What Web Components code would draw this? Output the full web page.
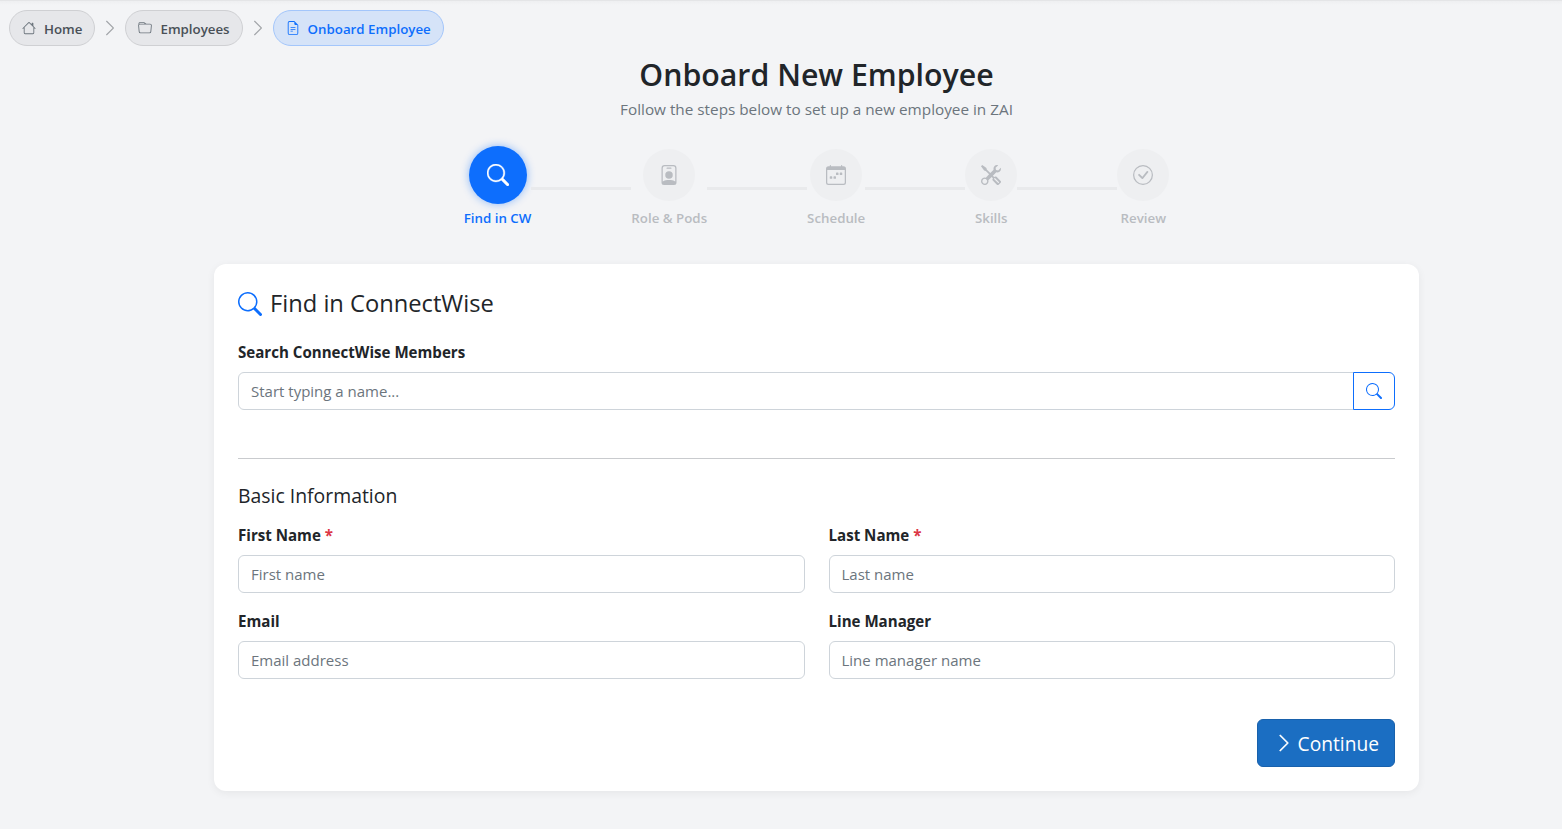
<!DOCTYPE html>
<html lang="en">
<head>
<meta charset="utf-8">
<title>Onboard New Employee</title>
<style>
	html, body { margin: 0; height: 100%; }
	body {
		background: #f3f4f6;
		color: #212529;
		font-family: "Open Sans", "Noto Sans", sans-serif;
		font-size: 16px;
		overflow: hidden;
	}
</style>
</head>
<body>
<onboard-page>
	<crumb-bar slot="crumbs">
		<crumb-pill icon="house">Home</crumb-pill>
		<crumb-pill icon="folder">Employees</crumb-pill>
		<crumb-pill icon="file" active>Onboard Employee</crumb-pill>
	</crumb-bar>
	<step-bar slot="steps">
		<step-item icon="search" active>Find in CW</step-item>
		<step-item icon="badge">Role &amp; Pods</step-item>
		<step-item icon="calendar">Schedule</step-item>
		<step-item icon="tools">Skills</step-item>
		<step-item icon="check">Review</step-item>
	</step-bar>
	<find-card slot="card"></find-card>
</onboard-page>

<script>
const ICONS = {
	search: 'M11.742 10.344a6.5 6.5 0 1 0-1.397 1.398h-.001c.03.04.062.078.098.115l3.85 3.85a1 1 0 0 0 1.415-1.414l-3.85-3.85a1.007 1.007 0 0 0-.115-.1zM12 6.5a5.5 5.5 0 1 1-11 0 5.5 5.5 0 0 1 11 0z',
	house: 'M8.707 1.5a1 1 0 0 0-1.414 0L.646 8.146a.5.5 0 0 0 .708.708L2 8.207V13.5A1.5 1.5 0 0 0 3.5 15h9a1.5 1.5 0 0 0 1.5-1.5V8.207l.646.647a.5.5 0 0 0 .708-.708L13 5.793V2.5a.5.5 0 0 0-.5-.5h-1a.5.5 0 0 0-.5.5v1.293L8.707 1.5ZM13 7.207V13.5a.5.5 0 0 1-.5.5h-9a.5.5 0 0 1-.5-.5V7.207l5-5 5 5Z',
	folder: 'M.54 3.87.5 3a2 2 0 0 1 2-2h3.672a2 2 0 0 1 1.414.586l.828.828A2 2 0 0 0 9.828 3h3.982a2 2 0 0 1 1.992 2.181l-.637 7A2 2 0 0 1 13.174 14H2.826a2 2 0 0 1-1.991-1.819l-.637-7a1.99 1.99 0 0 1 .342-1.31zM2.19 4a1 1 0 0 0-.996 1.09l.637 7a1 1 0 0 0 .995.91h10.348a1 1 0 0 0 .995-.91l.637-7A1 1 0 0 0 13.81 4H2.19zm4.69-1.707A1 1 0 0 0 6.172 2H2.5a1 1 0 0 0-1 .981l.006.139C1.72 3.042 1.95 3 2.19 3h5.396l-.707-.707z',
	file: 'M5.5 7a.5.5 0 0 0 0 1h5a.5.5 0 0 0 0-1h-5zM5 9.5a.5.5 0 0 1 .5-.5h5a.5.5 0 0 1 0 1h-5a.5.5 0 0 1-.5-.5zm0 2a.5.5 0 0 1 .5-.5h2a.5.5 0 0 1 0 1h-2a.5.5 0 0 1-.5-.5zM9.5 0H4a2 2 0 0 0-2 2v12a2 2 0 0 0 2 2h8a2 2 0 0 0 2-2V4.5L9.5 0zm0 1v2A1.5 1.5 0 0 0 11 4.5h2V14a1 1 0 0 1-1 1H4a1 1 0 0 1-1-1V2a1 1 0 0 1 1-1h5.5z',
	chevron: 'M4.646 1.646a.5.5 0 0 1 .708 0l6 6a.5.5 0 0 1 0 .708l-6 6a.5.5 0 0 1-.708-.708L10.293 8 4.646 2.354a.5.5 0 0 1 0-.708z',
	badge: 'M6.5 2a.5.5 0 0 0 0 1h3a.5.5 0 0 0 0-1h-3zM11 8a3 3 0 1 1-6 0 3 3 0 0 1 6 0zM4.5 0A2.5 2.5 0 0 0 2 2.5V14a2 2 0 0 0 2 2h8a2 2 0 0 0 2-2V2.5A2.5 2.5 0 0 0 11.5 0h-7zM3 2.5A1.5 1.5 0 0 1 4.5 1h7A1.5 1.5 0 0 1 13 2.5v10.795a4.2 4.2 0 0 0-.776-.492C11.392 12.387 10.063 12 8 12s-3.392.387-4.224.803a4.2 4.2 0 0 0-.776.492V2.5z',
	calendar: 'M11 6.5a.5.5 0 0 1 .5-.5h1a.5.5 0 0 1 .5.5v1a.5.5 0 0 1-.5.5h-1a.5.5 0 0 1-.5-.5v-1zm-3 0a.5.5 0 0 1 .5-.5h1a.5.5 0 0 1 .5.5v1a.5.5 0 0 1-.5.5h-1a.5.5 0 0 1-.5-.5v-1zm-5 3a.5.5 0 0 1 .5-.5h1a.5.5 0 0 1 .5.5v1a.5.5 0 0 1-.5.5h-1a.5.5 0 0 1-.5-.5v-1zm3 0a.5.5 0 0 1 .5-.5h1a.5.5 0 0 1 .5.5v1a.5.5 0 0 1-.5.5h-1a.5.5 0 0 1-.5-.5v-1zM3.5 0a.5.5 0 0 1 .5.5V1h8V.5a.5.5 0 0 1 1 0V1h1a2 2 0 0 1 2 2v11a2 2 0 0 1-2 2H2a2 2 0 0 1-2-2V3a2 2 0 0 1 2-2h1V.5a.5.5 0 0 1 .5-.5zM1 4v10a1 1 0 0 0 1 1h12a1 1 0 0 0 1-1V4H1z',
	tools: 'M1 0 0 1l2.2 3.081a1 1 0 0 0 .815.419h.07a1 1 0 0 1 .708.293l2.675 2.675-2.617 2.654A3.003 3.003 0 0 0 0 13a3 3 0 1 0 5.878-.851l2.654-2.617.968.968-.305.914a1 1 0 0 0 .242 1.023l3.27 3.27a.997.997 0 0 0 1.414 0l1.586-1.586a.997.997 0 0 0 0-1.414l-3.27-3.27a1 1 0 0 0-1.023-.242L10.5 9.5l-.96-.96 2.68-2.643A3.005 3.005 0 0 0 16 3c0-.269-.035-.53-.102-.777l-2.14 2.141L12 4l-.364-1.757L13.777.102a3 3 0 0 0-3.675 3.68L7.462 6.46 4.793 3.793a1 1 0 0 1-.293-.707v-.071a1 1 0 0 0-.419-.814L1 0Zm9.646 10.646a.5.5 0 0 1 .708 0l2.914 2.915a.5.5 0 0 1-.707.707l-2.915-2.914a.5.5 0 0 1 0-.708ZM3 11l.471.242.529.026.287.445.445.287.026.529L5 13l-.242.471-.026.529-.445.287-.287.445-.529.026L3 15l-.471-.242L2 14.732l-.287-.445L1.268 14l-.026-.529L1 13l.242-.471.026-.529.445-.287.287-.445.529-.026L3 11Z',
	check: 'M8 15A7 7 0 1 1 8 1a7 7 0 0 1 0 14zm0 1A8 8 0 1 0 8 0a8 8 0 0 0 0 16zM10.97 4.97a.235.235 0 0 0-.02.022L7.477 9.417 5.384 7.323a.75.75 0 0 0-1.06 1.06L6.97 11.03a.75.75 0 0 0 1.079-.02l3.992-4.99a.75.75 0 0 0-1.071-1.05z'
};

const icon = (name, size) =>
	`<svg width="${size}" height="${size}" viewBox="0 0 16 16" fill="currentColor" aria-hidden="true"><path d="${ICONS[name]}"/></svg>`;

class OnboardPage extends HTMLElement {
	constructor() {
		super();
		this.attachShadow({mode: 'open'}).innerHTML = `
		<style>
			:host {
				display: block;
				min-height: 100vh;
				box-sizing: border-box;
				border-top: 1px solid #e4e5e7;
				padding: 9px 0 0 9px;
				background: linear-gradient(#eeeff1, #f3f4f6 4px);
			}
			main {
				margin-left: 62px;
				display: flex;
				flex-direction: column;
				align-items: center;
			}
			h1 {
				margin: 10px 0 0;
				font-size: 30.3px;
				line-height: 38px;
				font-weight: 600;
				color: #212529;
			}
			p {
				margin: 3px 0 0;
				font-size: 15.3px;
				line-height: 24px;
				color: #6c757d;
			}
			.steps { margin-top: 25px; }
			.card { margin-top: 36px; width: 1205px; }
		</style>
		<slot name="crumbs"></slot>
		<main>
			<h1>Onboard New Employee</h1>
			<p>Follow the steps below to set up a new employee in ZAI</p>
			<div class="steps"><slot name="steps"></slot></div>
			<div class="card"><slot name="card"></slot></div>
		</main>`;
	}
}

class CrumbBar extends HTMLElement {
	constructor() {
		super();
		this.attachShadow({mode: 'open'}).innerHTML = `
		<style>
			:host { display: flex; align-items: center; }
		</style>
		<slot></slot>`;
	}
}

class CrumbPill extends HTMLElement {
	constructor() {
		super();
		const active = this.hasAttribute('active');
		this.attachShadow({mode: 'open'}).innerHTML = `
		<style>
			:host { display: inline-flex; align-items: center; }
			.pill {
				display: inline-flex;
				align-items: center;
				gap: 8px;
				height: 36px;
				box-sizing: border-box;
				padding: 0 12px;
				border-radius: 18px;
				border: 1px solid ${active ? '#a3c6fb' : '#cfd0d3'};
				background: ${active ? '#d5e3f8' : '#e6e7ea'};
				color: ${active ? '#0d6efd' : '#495057'};
				font-size: 13.3px;
				font-weight: 600;
				white-space: nowrap;
			}
			.pill svg { color: ${active ? '#0d6efd' : '#6c757d'}; }
			.text { padding-top: 1px; }
			.sep { display: inline-flex; color: #a2a5a9; margin: 0 6px; }
		</style>
		<span class="pill">${icon(this.getAttribute('icon'), 14)}<span class="text"><slot></slot></span></span>
		${active ? '' : `<span class="sep">${icon('chevron', 18)}</span>`}`;
	}
}

class StepBar extends HTMLElement {
	constructor() {
		super();
		this.attachShadow({mode: 'open'}).innerHTML = `
		<style>
			:host { display: flex; align-items: flex-start; }
		</style>
		<slot></slot>`;
	}
}

class StepItem extends HTMLElement {
	constructor() {
		super();
		const active = this.hasAttribute('active');
		const last = !this.nextElementSibling;
		this.attachShadow({mode: 'open'}).innerHTML = `
		<style>
			:host { display: flex; align-items: flex-start; }
			.step { display: flex; flex-direction: column; align-items: center; min-width: 52px; }
			.slot { height: 58px; display: flex; align-items: center; }
			.dot {
				width: ${active ? 58 : 52}px;
				height: ${active ? 58 : 52}px;
				border-radius: 50%;
				display: flex;
				align-items: center;
				justify-content: center;
				background: ${active ? '#0d6efd' : '#eeeff1'};
				color: ${active ? '#fff' : '#b9bcc1'};
				box-shadow: ${active ? '0 0 8px rgba(13,110,253,.45)' : 'none'};
			}
			.dot svg { stroke: currentColor; stroke-width: ${active ? .3 : 0}; }
			.label {
				margin-top: 4px;
				font-size: 13.3px;
				line-height: 20px;
				font-weight: 600;
				white-space: nowrap;
				color: ${active ? '#0d6efd' : '#b9bcc1'};
			}
			.line { width: 100px; height: 3px; margin-top: 41px; background: #e9eaec; }
		</style>
		<div class="step">
			<div class="slot"><div class="dot">${icon(this.getAttribute('icon'), active ? 22 : 20)}</div></div>
			<div class="label"><slot></slot></div>
		</div>
		${last ? '' : '<div class="line"></div>'}`;
	}
}

class TextField extends HTMLElement {
	constructor() {
		super();
		const req = this.hasAttribute('required');
		this.attachShadow({mode: 'open'}).innerHTML = `
		<style>
			:host { display: block; min-width: 0; }
			label { display: block; font-weight: 700; font-size: 15.1px; line-height: 24px; margin-bottom: 8px; color: #212529; }
			em { font-style: normal; color: #dc3545; }
			.row { display: flex; }
			input {
				flex: 1;
				min-width: 0;
				height: 38px;
				box-sizing: border-box;
				padding: 6px 12px;
				border: 1px solid #ced4da;
				border-radius: 6px;
				background: #fff;
				color: #212529;
				font: inherit;
				font-size: 15px;
				outline: none;
			}
			input::placeholder { color: #6c757d; opacity: 1; }
			:host([search]) input { border-radius: 6px 0 0 6px; }
			button {
				width: 42px;
				height: 38px;
				margin-left: -1px;
				padding: 0;
				border: 1px solid #0d6efd;
				border-radius: 0 6px 6px 0;
				background: #fff;
				color: #0d6efd;
				display: flex;
				align-items: center;
				justify-content: center;
			}
		</style>
		<label>${this.getAttribute('label')}${req ? ' <em>*</em>' : ''}</label>
		<div class="row">
			<input type="text" placeholder="${this.getAttribute('placeholder')}">
			${this.hasAttribute('search') ? `<button type="button">${icon('search', 16)}</button>` : ''}
		</div>`;
	}
}

class FindCard extends HTMLElement {
	constructor() {
		super();
		this.attachShadow({mode: 'open'}).innerHTML = `
		<style>
			:host {
				display: block;
				box-sizing: border-box;
				background: #fff;
				border-radius: 12px;
				box-shadow: 0 2px 8px rgba(0,0,0,.06);
				padding: 25px 24px 24px;
			}
			h2 {
				margin: 0 0 22px;
				display: flex;
				align-items: center;
				gap: 8px;
				font-size: 23.7px;
				line-height: 29px;
				font-weight: 500;
				color: #212529;
			}
			h2 svg { color: #0d6efd; }
			hr { border: 0; border-top: 1px solid #c9cbce; margin: 48px 0 25px; }
			h3 { margin: 0 0 15px; font-size: 19.4px; line-height: 24px; font-weight: 500; color: #212529; }
			.grid { display: grid; grid-template-columns: 1fr 1fr; column-gap: 24px; row-gap: 16px; }
			.actions { display: flex; justify-content: flex-end; margin-top: 40px; }
			.go {
				display: inline-flex;
				align-items: center;
				gap: 4px;
				height: 48px;
				box-sizing: border-box;
				padding: 0 15px 0 16px;
				border: 1px solid #1861ac;
				border-radius: 6px;
				background: #1b6ec2;
				color: #fff;
				font: inherit;
				font-size: 19.2px;
			}
			.go span { padding-top: 1px; }
			.go svg { stroke: currentColor; stroke-width: .3; }
		</style>
		<h2>${icon('search', 24)}Find in ConnectWise</h2>
		<text-field search label="Search ConnectWise Members" placeholder="Start typing a name..."></text-field>
		<hr>
		<h3>Basic Information</h3>
		<div class="grid">
			<text-field required label="First Name" placeholder="First name"></text-field>
			<text-field required label="Last Name" placeholder="Last name"></text-field>
			<text-field label="Email" placeholder="Email address"></text-field>
			<text-field label="Line Manager" placeholder="Line manager name"></text-field>
		</div>
		<div class="actions"><button class="go" type="button">${icon('chevron', 20)}<span>Continue</span></button></div>`;
	}
}

customElements.define('crumb-bar', CrumbBar);
customElements.define('crumb-pill', CrumbPill);
customElements.define('step-bar', StepBar);
customElements.define('step-item', StepItem);
customElements.define('text-field', TextField);
customElements.define('find-card', FindCard);
customElements.define('onboard-page', OnboardPage);
</script>
</body>
</html>
